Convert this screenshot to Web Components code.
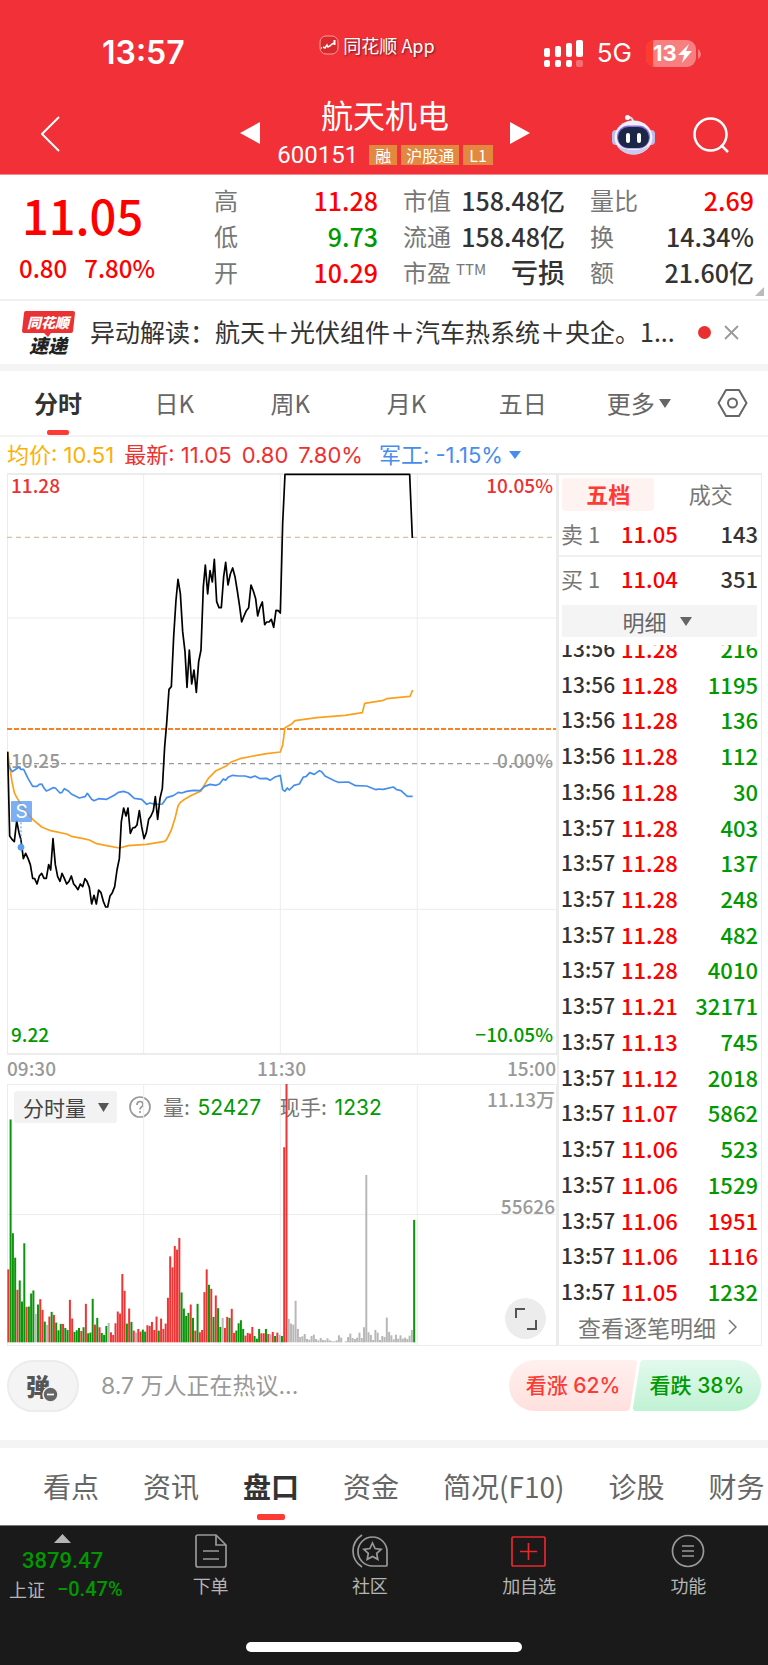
<!DOCTYPE html>
<html lang="zh-CN">
<head>
<meta charset="utf-8">
<meta name="viewport" content="width=device-width, initial-scale=1">
<title>航天机电 600151</title>
<style>
html{background:#1a1a1a}
body{margin:0;background:#fff;color:#333;font-family:"Noto Sans CJK SC","Liberation Sans",sans-serif;--up:#fe0000;--down:#090;--line:#efefef;--accent:#fd3a33}
</style>
</head>
<body>
<stock-page></stock-page>
<script>
const base = `<style>
*{box-sizing:border-box}
:host{display:block}
button,input{font:inherit;color:inherit;border:0;background:none;padding:0;margin:0;cursor:pointer}
a{color:inherit;text-decoration:none}
svg{display:block;flex:none}
.up{color:var(--up)}.down{color:var(--down)}
</style>`;
function define(name, markup) {
  customElements.define(name, class extends HTMLElement {
    connectedCallback() {
      if (this.shadowRoot) return;
      this.attachShadow({ mode: 'open' }).innerHTML = base + (typeof markup === 'function' ? markup(this) : markup);
    }
  });
}

define('status-bar', `
<style>
:host{display:grid;grid-template-columns:1fr auto 1fr;align-items:center;height:92px;padding:18px 68px 4px 54px;color:#fff}
.time{font:600 32px/36px Inter,sans-serif;padding-left:48px}
.app{display:flex;align-items:center;gap:4px;font-size:18px;line-height:24px;text-shadow:1px 1px 2px #0008;padding-bottom:16px}
.right{display:flex;justify-content:flex-end;align-items:center;gap:14px}
.net{font:400 26px/32px Inter,sans-serif}
.bat{position:relative;width:54px;height:27px}
.bat svg{position:absolute;left:0;top:0}
.bat b{position:absolute;left:7px;top:0;font:700 22px/27px Inter,sans-serif}
</style>
<span class="time">13:57</span>
<span class="app"><svg width="20" height="20" viewBox="0 0 20 20"><rect x="1" y="1" width="18" height="18" rx="6" fill="#d8292e" stroke="#ff9a9a"/><path d="M2 13h1M4 12l2 1 2-3 1 2 2-1 2-2 2-1" fill="none" stroke="#fff" stroke-width="1.500"/><path d="M15.500 5v5" stroke="#fff" stroke-width="2"/></svg>同花顺 App</span>
<span class="right">
<svg width="39" height="27" viewBox="0 0 39 27" fill="#fff"><rect x="0" y="8" width="6" height="9" rx="2"/><rect x="11" y="6" width="6" height="11" rx="2"/><rect x="22" y="3" width="6" height="14" rx="2"/><rect x="32" y="0" width="7" height="17" rx="2"/><rect x="0" y="20" width="6" height="7" rx="2"/><rect x="11" y="20" width="6" height="7" rx="2"/><rect x="22" y="20" width="6" height="7" rx="2"/><rect x="32" y="20" width="7" height="7" rx="2" opacity=".3"/></svg>
<span class="net">5G</span>
<span class="bat"><svg width="55" height="27" viewBox="0 0 55 27"><rect width="50" height="27" rx="9" fill="#f77f80"/><path d="M7 0a9 9 0 0 0-7 9v9a9 9 0 0 0 7 9z" fill="#ff3b30"/><path d="M52 9q3 2 3 5t-3 5z" fill="#f77f80"/><path d="M43 4l-11 11h6l-2 8 10-12h-6z" fill="#fff"/></svg><b>13</b></span>
</span>`);

define('stock-nav', `
<style>
:host{display:grid;grid-template-columns:1fr 290px 1fr;height:83px;padding:0 39px 0 41px;align-items:center;color:#fff;border-bottom:1px solid #f78a8d}
.c{display:grid;grid-template-columns:20px 1fr 20px;align-items:center}
.t{display:flex;flex-direction:column;align-items:center;padding-bottom:3px;gap:5px}
h1{font-weight:400;font-size:32px;line-height:42px;margin:0}
.sub{display:flex;align-items:center;gap:4px;font:400 24px/30px Roboto,sans-serif}
.sub b{font:400 16px/20px "Noto Sans CJK SC",sans-serif;background:#e2883f;padding:0 6px;}
.sub b.w{padding:0 5px}
.sub span{margin-right:7px}
.r{display:flex;justify-content:flex-end;gap:38px;align-items:center}
.l{padding-top:6px}
.r{padding-top:3px}
</style>
<div class="l"><button aria-label="返回"><svg width="19" height="36" viewBox="0 0 19 36" fill="none" stroke="#fff" stroke-width="2"><path d="M18 1L1 18l17 17"/></svg></button></div>
<div class="c">
<button aria-label="上一只"><svg width="20" height="24" viewBox="0 0 20 24"><path d="M20 1v22L0 12z" fill="#fff"/></svg></button>
<div class="t"><h1>航天机电</h1><div class="sub"><span>600151</span><b>融</b><b class="w">沪股通</b><b>L1</b></div></div>
<button aria-label="下一只"><svg width="20" height="24" viewBox="0 0 20 24"><path d="M0 1v22l20-11z" fill="#fff"/></svg></button>
</div>
<div class="r">
<button aria-label="智能助手"><svg width="43" height="40" viewBox="0 0 43 40"><path d="M15 2.500q6-1 6 5" fill="none" stroke="#dfe0f6" stroke-width="2"/><circle cx="15.500" cy="2.500" r="2.500" fill="#fff"/><rect x="0" y="15" width="8" height="15" rx="4" fill="#b9bcec"/><rect x="35" y="15" width="8" height="15" rx="4" fill="#b9bcec"/><ellipse cx="21.500" cy="22.500" rx="19" ry="17" fill="#f2f1fb"/><path d="M5 30q6 9.500 16.500 9.500T38 30q-6 5-16.500 5T5 30z" fill="#c9cbee"/><rect x="5" y="10.500" width="33" height="23" rx="11.500" fill="#8b6fd9"/><rect x="6" y="12" width="31" height="21" rx="10.500" fill="#1c2748"/><rect x="14" y="18" width="4" height="10" rx="2" fill="#fff"/><rect x="25" y="18" width="4" height="10" rx="2" fill="#fff"/></svg></button>
<button aria-label="搜索"><svg width="36" height="36" viewBox="0 0 36 36" fill="none" stroke="#fff" stroke-width="2.500"><circle cx="17.500" cy="17.500" r="16"/><path d="M28 28l7 7"/></svg></button>
</div>`);

define('quote-item', el => `
<style>
:host{display:flex;justify-content:space-between;align-items:center;height:36px;white-space:nowrap}
.k{color:#777;font-size:24px;line-height:36px}
sup{font-size:15px;line-height:16px;vertical-align:7px;margin-left:5px}
.v{font-weight:500;font-size:25px;line-height:36px;color:#333}
.v.text{font-size:27px}
.v.up{color:var(--up)}.v.down{color:var(--down)}
</style>
<span class="k">${el.getAttribute('label')}${el.hasAttribute('note') ? `<sup>${el.getAttribute('note')}</sup>` : ''}</span><span class="v ${el.getAttribute('trend') || ''}"><slot></slot></span>`);

define('quote-panel', `
<style>
:host{display:grid;position:relative;grid-template-columns:170fr 164fr 162fr 164fr;column-gap:25px;padding:7px 14px 9px 19px;border-bottom:2px solid var(--line);background:#fff}
.big{padding:0 0 2px 3px;font-weight:500;font-size:47px;line-height:66px;color:var(--up)}
.chg{display:flex;gap:17px;font-weight:500;font-size:24px;line-height:36px;color:var(--up)}
svg{position:absolute;right:4px;bottom:3px}
</style>
<div><div class="big">11.05</div><div class="chg"><span>0.80</span><span>7.80%</span></div></div>
<div><quote-item label="高" trend="up">11.28</quote-item><quote-item label="低" trend="down">9.73</quote-item><quote-item label="开" trend="up">10.29</quote-item></div>
<div><quote-item label="市值">158.48亿</quote-item><quote-item label="流通">158.48亿</quote-item><quote-item label="市盈" note="TTM" trend="text">亏损</quote-item></div>
<div><quote-item label="量比" trend="up">2.69</quote-item><quote-item label="换">14.34%</quote-item><quote-item label="额">21.60亿</quote-item></div>
<svg width="9" height="9" viewBox="0 0 9 9"><path d="M9 0v9H0z" fill="#bbb"/></svg>`);

define('news-banner', `
<style>
:host{display:flex;align-items:center;height:70px;padding:0 29px 0 22px;background:#fff;border-bottom:7px solid #f4f4f4}
.logo{position:relative;width:53px;height:44px;margin-right:15px;flex:none;font-style:italic;font-weight:900;text-align:center}
.logo svg{position:absolute;left:0;top:0}
.logo b,.logo i{position:absolute;left:0;width:52px;white-space:nowrap}
.logo b{top:1px;font-size:14px;line-height:20px;color:#fff}
.logo i{top:23px;font-size:19px;line-height:22px;color:#222}
a{flex:1;min-width:0;overflow:hidden;white-space:nowrap;text-overflow:ellipsis;font-size:25px;line-height:36px;padding-bottom:4px}
.dot{width:13px;height:13px;border-radius:50%;background:#e92f2f;margin:0 13px 0 19px;flex:none}
</style>
<span class="logo"><svg width="53" height="26" viewBox="0 0 53 26"><path d="M4 0h47q2 0 2 2l-2 18q0 2-2 2H29l-3 4-4-4H2q-2 0-2-2L2 2q0-2 2-2z" fill="#ea3133"/></svg><b>同花顺</b><i>速递</i></span>
<a href="#news">异动解读：航天＋光伏组件＋汽车热系统＋央企。1...</a>
<span class="dot"></span>
<button aria-label="关闭"><svg width="15" height="15" viewBox="0 0 15 15" stroke="#999" stroke-width="1.800"><path d="M1 1l13 13M14 1L1 14"/></svg></button>`);

define('period-tabs', `
<style>
:host{display:grid;grid-template-columns:repeat(6,116fr) 71fr;height:66px;align-items:stretch;background:#fff;border-bottom:2px solid #f3f3f3;font-size:24px;line-height:36px;color:#666}
button{position:relative;display:flex;align-items:center;justify-content:center;gap:4px}
.on{font-weight:700;color:#333}
.on::after{content:"";position:absolute;left:calc(50% - 11px);bottom:0;width:22px;height:5px;border-radius:2px;background:var(--accent)}
</style>
<button class="on">分时</button><button>日K</button><button>周K</button><button>月K</button><button>五日</button>
<button>更多<svg width="12" height="9" viewBox="0 0 12 9"><path d="M0 0h12L6 9z" fill="#666"/></svg></button>
<button aria-label="设置"><svg width="31" height="28" viewBox="0 0 31 28" fill="none" stroke="#666" stroke-width="2"><path d="M9 1h13l7.500 13L22 27H9L1.500 14z" stroke-linejoin="round"/><circle cx="15.500" cy="14" r="4.500"/></svg></button>`);

define('quote-legend', `
<style>
:host{display:flex;align-items:center;gap:10px;height:36px;padding:0 0 1px 7px;font:400 22px/30px Inter,"Noto Sans CJK SC",sans-serif;white-space:pre;color:#ee3030}
.avg{color:#fdb000}
.sec{display:flex;align-items:center;gap:6px;color:#468eee;margin-left:6px}
</style>
<span class="avg">均价: 10.51</span><span>最新: 11.05</span><span>0.80</span><span>7.80%</span><button class="sec">军工: -1.15%<svg width="12" height="8" viewBox="0 0 12 8"><path d="M0 0h12L6 8z" fill="#468eee"/></svg></button>`);

// Chart view boxes are in thirds of a pixel at the default width.
define('price-chart', `
<style>
:host{position:relative;height:582px;border:1px solid #ececec;border-width:2px 1px}
.plot{position:absolute;left:-1px;top:-2px;width:calc(100% + 2px);height:calc(100% + 4px)}
.plot *{vector-effect:non-scaling-stroke;fill:none;stroke-linejoin:round}
.l{position:absolute;font-weight:500;font-size:19px;line-height:24px;color:#999}
.tl{left:3px;top:-2px}.tr{right:3px;top:-2px}.ml{left:3px;top:273px}.mr{right:3px;top:273px}.bl{left:3px;bottom:7px}.br{right:3px;bottom:7px}
.r{color:#ee3030}.g{color:#090}
.s{position:absolute;left:3px;top:326px;width:21px;height:21px;background:#5c9cf0cc;color:#fff;font:400 19px/21px Inter,sans-serif;text-align:center;border-radius:1px}
</style>
<span class="l tl r">11.28</span><span class="l tr r">10.05%</span><span class="l ml">10.25</span><span class="l mr">0.00%</span><span class="l bl g">9.22</span><span class="l br g">−10.05%</span>
<svg class="plot" viewBox="21 39 1650 1746" preserveAspectRatio="none">
<path stroke="#ececec" d="M431 39V1782M841 39V1782M1252 39V1782M21 474H1668M21 1348H1668"/>
<path stroke="#dcbf98" stroke-width="1.300" stroke-dasharray="5 4" d="M21 232H1668"/>
<path stroke="#f98220" stroke-width="1.800" stroke-dasharray="5 2" d="M21 807H1668"/>
<path stroke="#999" stroke-width="1.300" stroke-dasharray="5 4" d="M21 911H1668"/>
<polyline stroke="#fca01c" stroke-width="1.700" points="23,875 29,920 36,965 43,998 50,1012 70,1045 98,1078 125,1101 152,1112 200,1122 214,1129 250,1136 268,1140 290,1151 320,1157 358,1164 385,1157 440,1153 494,1144 500,1138 514,1110 525,1075 534,1038 541,1027 555,1017 575,1006 603,993 610,980 625,955 648,932 680,917 692,907 720,896 760,888 800,881 841,876 848,855 855,803 875,792 885,782 950,773 1035,766 1087,758 1094,730 1150,721 1160,716 1230,709 1238,690"/>
<polyline stroke="#468eee" stroke-width="1.700" points="23,912 30,925 37,935 44,930 57,921 62,928 71,928 84,955 98,979 111,979 118,973 125,972 132,984 139,993 146,990 159,983 166,984 180,999 186,997 193,986 205,993 214,1002 238,1014 255,1010 262,1000 275,1018 282,1022 296,1016 320,1018 344,1005 355,997 371,994 385,999 403,1015 425,1018 440,1033 450,1029 466,1033 487,1032 500,1013 520,1007 535,997 545,999 560,994 580,991 600,992 614,979 630,973 648,976 658,972 670,957 677,961 684,952 698,946 715,948 735,948 752,953 765,948 780,956 800,955 810,961 825,951 841,946 848,989 855,994 862,984 868,990 882,976 898,972 910,951 918,950 929,938 943,943 958,932 965,935 975,948 1005,963 1015,967 1045,966 1067,977 1100,978 1128,989 1135,987 1150,988 1180,981 1190,989 1203,992 1222,1009 1238,1009"/>
<polyline stroke="#000" stroke-width="1.700" points="23,875 25,960 29,1128 36,1138 43,1145 50,1083 57,1118 63,1140 70,1196 77,1180 84,1195 91,1214 98,1255 104,1256 111,1272 118,1248 125,1240 132,1255 139,1255 146,1214 152,1230 159,1136 166,1214 173,1250 180,1264 186,1240 193,1255 200,1272 207,1264 214,1248 221,1272 228,1280 234,1289 241,1272 248,1280 255,1256 261,1264 268,1282 275,1332 282,1306 289,1332 296,1290 303,1298 310,1324 317,1341 323,1341 330,1308 337,1298 344,1280 351,1230 358,1196 364,1085 371,1044 378,1068 384,1044 391,1120 398,1104 405,1102 411,1095 418,1052 425,1100 432,1136 439,1118 446,1078 453,1068 460,1052 466,1010 473,1078 480,1015 487,985 494,860 500,790 507,688 514,680 521,530 528,420 534,358 541,400 548,515 555,575 561,682 568,570 575,672 582,630 589,697 596,605 603,570 610,380 616,315 623,402 630,332 637,366 643,298 650,425 657,443 664,443 671,350 677,307 684,375 691,342 698,324 705,350 712,393 719,440 725,486 732,468 739,452 746,443 753,375 760,393 767,416 773,468 780,442 787,426 794,494 800,486 807,486 814,478 821,502 828,451 835,452 841,459 848,190 855,43 1229,43 1237,234"/>
<path stroke="#468eee" stroke-dasharray="2 2" d="M63 1087V1162"/><circle cx="63" cy="1162" r="10" style="fill:#5c9cf0"/>
</svg>
<span class="s">S</span>`);

define('time-axis', `
<style>:host{display:flex;justify-content:space-between;align-items:center;height:29px;font-weight:500;font-size:19px;line-height:26px;color:#999;padding:0 1px 3px 0}</style>
<span>09:30</span><span>11:30</span><span>15:00</span>`);

const volumes = 'r218 g666 g326 g253 r157 g185 g122 g296 r106 g107 g146 g155 n85 g113 r129 r97 g62 n52 r77 g91 r82 g59 g36 g55 r55 g43 g37 r127 r71 g31 g36 g43 r34 g45 r115 g27 g29 g130 r53 g73 r45 g28 g22 g49 n58 r30 r22 r57 r92 r86 r204 r154 g56 r101 g61 r35 n29 r40 r32 g38 g32 r51 r49 r61 r37 r77 g35 r71 r40 r56 r133 r257 r224 r288 r277 r312 g149 g101 g79 g88 r113 g73 r35 g115 r30 r37 r150 r218 g172 r160 g76 r140 g102 g46 n73 r43 r76 g73 r100 r28 g35 g57 g66 g40 r20 r28 r26 r46 g19 g11 g40 r27 r27 g40 r25 n24 r31 g19 r29 n22 g19 r583 r772 n70 n56 n53 n124 n40 n16 n18 n25 n10 n8 n19 n23 n10 n6 n13 n7 n6 n12 n6 n3 n3 n6 n21 n14 n0 n3 n16 n26 n13 n10 n14 n29 n13 n45 n500 n30 n22 n7 n37 n29 n7 n19 n16 n74 n31 n21 n9 n23 n11 n21 n11 n14 n10 n20 n37 g366'.split(' ');
const tones = { r: '#ee3535', g: '#0a960a', n: '#b8b8b8' };
define('volume-chart', () => `
<style>
:host{position:relative;height:262px;border:1px solid #ececec}
.plot{position:absolute;left:-1px;top:-1px;width:calc(100% + 2px);height:calc(100% + 2px);pointer-events:none}
.head{display:flex;align-items:center;height:32px;margin:6px 0 0 6px;font-size:21px;line-height:30px;color:#777;white-space:pre}
.pick{display:flex;align-items:center;justify-content:space-between;width:103px;height:32px;padding:0 8px 0 9px;background:#f2f2f2;border-radius:3px;color:#444;margin-right:12px}
.help{margin-right:12px}
.head b{font:400 21px/30px Inter,sans-serif;color:#090;margin-left:3px}
.head span+span{margin-left:18px}
.l{position:absolute;right:1px;font-size:19px;font-weight:500;line-height:24px;color:#999}
.a{top:2px}.b{top:109px}
.exp{position:absolute;right:10px;bottom:6px;width:41px;height:41px;border-radius:50%;background:#ececec;display:grid;place-items:center}
</style>
<div class="head"><button class="pick">分时量<svg width="11" height="9" viewBox="0 0 11 9"><path d="M0 0h11L5.500 9z" fill="#555"/></svg></button><button class="help" aria-label="说明"><svg width="22" height="22" viewBox="0 0 22 22" fill="none" stroke="#999" stroke-width="1.700"><circle cx="11" cy="11" r="10"/><path d="M8 9q0-3.500 3-3.500T14 8.500q0 1.500-1.500 2.500T11 13.500M11 15v2"/></svg></button><span>量: <b>52427</b></span><span>现手: <b>1232</b></span></div>
<span class="l a">11.13万</span><span class="l b">55626</span>
<svg class="plot" viewBox="21 225 1650 783" preserveAspectRatio="none"><path stroke="#ececec" vector-effect="non-scaling-stroke" d="M431 225V1005M841 225V1005M1252 225V1005M21 615H1668"/>${volumes.map((v, i) => `<rect x="${(22 + 6.84 * i).toFixed(1)}" y="${997 - v.slice(1)}" width="6" height="${v.slice(1)}" fill="${tones[v[0]]}"/>`).join('')}</svg>
<button class="exp" aria-label="全屏"><svg width="22" height="22" viewBox="0 0 22 22" fill="none" stroke="#555" stroke-width="2"><path d="M1 10V1h9M21 12v9h-9"/></svg></button>`);

const ticks = [['13:56','11.28',216],['13:56','11.28',1195],['13:56','11.28',136],['13:56','11.28',112],['13:56','11.28',30],['13:57','11.28',403],['13:57','11.28',137],['13:57','11.28',248],['13:57','11.28',482],['13:57','11.28',4010],['13:57','11.21',32171],['13:57','11.13',745],['13:57','11.12',2018],['13:57','11.07',5862],['13:57','11.06',523],['13:57','11.06',1529],['13:57','11.06',1951,1],['13:57','11.06',1116,1],['13:57','11.05',1232]];
define('order-panel', () => `
<style>
:host{display:flex;flex-direction:column;border:1px solid #ececec;border-top-width:2px;border-left-width:2px;font-weight:500;font-size:22px;line-height:30px}
.tabs{display:grid;grid-template-columns:92fr 106fr;padding:3px 0 0 3px;font-weight:400;color:#777}
.tabs button{height:33px;border-radius:3px;padding:0 0 3px 6px}
.tabs .on{background:#fff3f2;color:var(--accent);font-weight:700;padding-left:0}
.q{display:grid;grid-template-columns:60px 1fr auto;align-items:center;height:46px;padding:0 3px 1px 2px;border-bottom:2px solid var(--line)}
.q+.q{border:0;height:44px;padding-bottom:3px}
.q span:first-child{color:#777;font-weight:400;white-space:pre}
.more{display:flex;align-items:center;justify-content:center;gap:13px;height:32px;margin:4px 4px 8px 3px;padding-right:5px;background:#f4f4f4;color:#666;font-weight:400}
.clip{flex:1;contain:size;overflow:hidden;display:flex;flex-direction:column;justify-content:flex-end;padding-bottom:2px}
table{width:100%;height:679px;border-collapse:collapse;flex:none}
td{padding:0;line-height:34px}
td:nth-child(1){padding-left:2px;width:62px;font-size:21px}
td:nth-child(3){text-align:right;padding-right:3px}
.all{display:flex;align-items:center;justify-content:center;gap:12px;height:34px;padding:0 5px 2px 0;color:#777;font-weight:400;font-size:23px}
</style>
<div class="tabs"><button class="on">五档</button><button>成交</button></div>
<div class="q"><span>卖 1</span><span class="up">11.05</span><span>143</span></div>
<div class="q"><span>买 1</span><span class="up">11.04</span><span>351</span></div>
<button class="more">明细<svg width="12" height="9" viewBox="0 0 12 9"><path d="M0 0h12L6 9z" fill="#666"/></svg></button>
<div class="clip"><table><tbody>${ticks.map(t => `<tr><td>${t[0]}</td><td class="up">${t[1]}</td><td class="${t[3] ? 'up' : 'down'}">${t[2]}</td></tr>`).join('')}</tbody></table></div>
<a class="all" href="#ticks">查看逐笔明细<svg width="9" height="16" viewBox="0 0 9 16" fill="none" stroke="#777" stroke-width="1.500"><path d="M1 1l7 7-7 7"/></svg></a>`);

define('chat-bar', `
<style>
:host{display:flex;align-items:center;height:102px;padding:14px 7px 29px;background:#fff;border-bottom:8px solid #f4f4f4}
.dan{position:relative;width:72px;height:52px;border-radius:26px;background:#f4f4f4;border:2px solid #ececec;font-weight:900;font-size:24px;line-height:30px;color:#555;flex:none;padding-right:10px}
.dan svg{position:absolute;left:33px;top:24px}
input{flex:1;min-width:0;margin:0 22px;font:400 23px/34px Inter,"Noto Sans CJK SC",sans-serif;height:36px;outline:0}
input::placeholder{color:#999;opacity:1}
.v{position:relative;width:128px;height:51px;flex:none;font:500 21px/51px Inter,"Noto Sans CJK SC",sans-serif;white-space:nowrap}
.v svg{position:absolute;inset:0}
.v span{position:relative}
.a{color:#fd3a33}.b{color:#090;margin-left:-4px}
</style>
<button class="dan" aria-label="弹幕">弹<svg width="17" height="17" viewBox="0 0 17 17"><circle cx="8.500" cy="8.500" r="7.500" fill="#666" stroke="#f4f4f4" stroke-width="1.500"/><path d="M5 8.500h7" stroke="#fff" stroke-width="1.700"/></svg></button>
<input placeholder="8.7 万人正在热议..." aria-label="参与讨论">
<button class="v a"><svg width="128" height="51" viewBox="0 0 128 51"><defs><linearGradient id="g" x2="0" y2="1"><stop stop-color="#fff0ee"/><stop offset="1" stop-color="#fee0de"/></linearGradient></defs><path d="M25.500 0H125q3 0 3 3l-7 45q-1 3-4 3H25.500a25.500 25.500 0 0 1 0-51z" fill="url(#g)"/></svg><span>看涨 62%</span></button>
<button class="v b"><svg width="128" height="51" viewBox="0 0 128 51"><defs><linearGradient id="h" x2="0" y2="1"><stop stop-color="#e2f9ed"/><stop offset="1" stop-color="#c0f2d4"/></linearGradient></defs><path d="M11 0h91.500a25.500 25.500 0 0 1 0 51H3q-3 0-3-3L7 3q1-3 4-3z" fill="url(#h)"/></svg><span>看跌 38%</span></button>`);

define('section-tabs', `
<style>
:host{display:flex;gap:44px;height:77px;padding-left:43px;overflow:hidden;background:#fff;font-size:28px;line-height:40px;color:#666;white-space:nowrap}
a{position:relative;flex:none;padding-top:18px}
.on{font-weight:700;color:#333}
.on::after{content:"";position:absolute;left:calc(50% - 14px);bottom:5px;width:28px;height:6px;border-radius:2px;background:var(--accent)}
</style>
<a href="#a">看点</a><a href="#b">资讯</a><a class="on" href="#c">盘口</a><a href="#d">资金</a><a href="#e">简况(F10)</a><a href="#f">诊股</a><a href="#g">财务</a>`);

define('nav-item', `
<style>
:host{display:flex;flex-direction:column;align-items:center}
a{display:flex;flex-direction:column;align-items:center;gap:5px;font-size:18px;line-height:24px}
</style><a href="#nav"><slot name="icon"></slot><slot></slot></a>`);

define('bottom-nav', `
<style>
:host{display:flex;flex-direction:column;height:141px;background:#1a1a1a;color:#b5b5b5;border:solid #777;border-width:1px 0}
.row{display:grid;grid-template-columns:131px repeat(4,1fr);padding-top:8px}
.idx{display:flex;flex-direction:column;padding-left:9px;color:#090;font:500 22px/28px Roboto,sans-serif}
.idx svg{margin:0 0 4px 45px}
.idx b{font-weight:500;padding-left:13px}
.idx span{display:flex;gap:12px;font-size:20px}
.idx i{font:400 18px/28px "Noto Sans CJK SC",sans-serif;color:#b5b5b5}
nav-item svg{fill:none;stroke:#999;stroke-width:1.700}
.home{width:276px;height:10px;border-radius:5px;background:#fff;margin:auto auto 13px}
</style>
<div class="row">
<a class="idx" href="#index"><svg width="17" height="9" viewBox="0 0 17 9"><path d="M0 9h17L8.500 0z" fill="#b5b5b5"/></svg><b>3879.47</b><span><i>上证</i>−0.47%</span></a>
<nav-item><svg slot="icon" width="32" height="34" viewBox="0 0 32 34"><path d="M3 1h18l10 10v20q0 2-2 2H3q-2 0-2-2V3q0-2 2-2zM21 1v10h10M8 17h16M8 25h16"/></svg>下单</nav-item>
<nav-item><svg slot="icon" width="36" height="34" viewBox="0 0 36 34"><path d="M20.500 3A14.500 14.500 0 0 1 35 17.500V31q0 1-1 1H20.500a14.500 14.500 0 0 1 0-29zM10 1Q1 7 1 17t9 16M20.500 9l2.600 5.500 6 .8-4.400 4.100 1.100 5.900-5.300-2.900-5.300 2.900 1.100-5.900-4.400-4.100 6-.8z"/></svg>社区</nav-item>
<nav-item><svg slot="icon" width="36" height="34" viewBox="0 0 36 34" style="stroke:#e8282c"><rect x="1" y="3" width="33" height="29" rx="1"/><path d="M17.500 9v17M9 17.500h17"/></svg>加自选</nav-item>
<nav-item><svg slot="icon" width="34" height="34" viewBox="0 0 34 34"><circle cx="17" cy="17" r="15.500"/><path d="M11 12h12M11 17h12M11 22h12"/></svg>功能</nav-item>
</div>
<div class="home"></div>`);

define('stock-page', `
<style>
header{background:#f13037}
main{display:grid;grid-template-columns:550fr 205px;padding:0 6px 0 7px;background:#fff}
</style>
<header><status-bar></status-bar><stock-nav></stock-nav></header>
<quote-panel></quote-panel>
<news-banner></news-banner>
<period-tabs></period-tabs>
<quote-legend></quote-legend>
<main><section><price-chart></price-chart><time-axis></time-axis><volume-chart></volume-chart></section><order-panel></order-panel></main>
<chat-bar></chat-bar>
<section-tabs></section-tabs>
<bottom-nav></bottom-nav>`);
</script>
</body>
</html>
